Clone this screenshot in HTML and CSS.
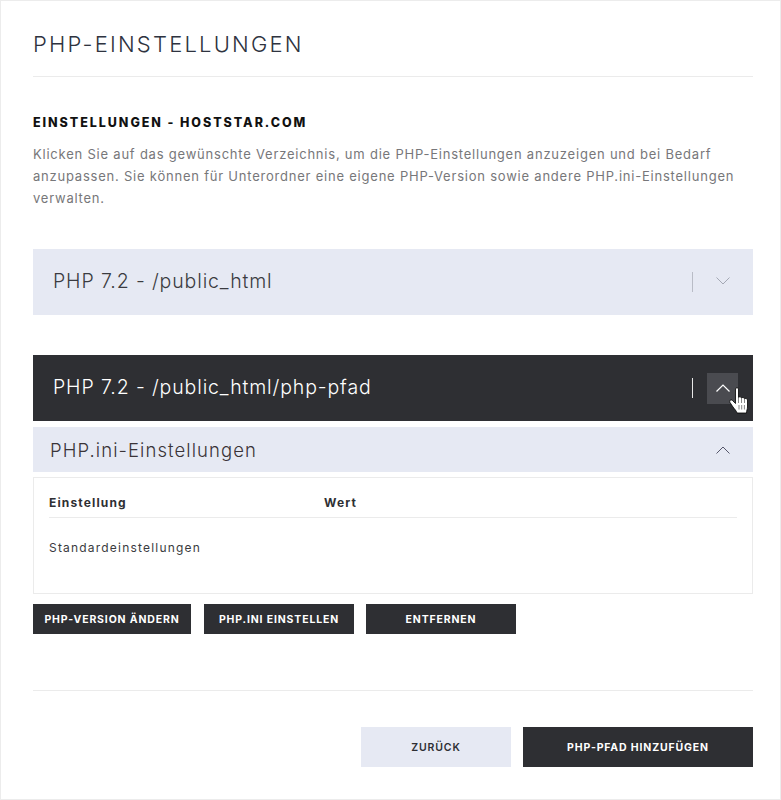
FILE: index.html
```html
<!DOCTYPE html>
<html lang="de">
<head>
<meta charset="utf-8">
<title>PHP-Einstellungen</title>
<link rel="stylesheet" href="styles.css">
</head>
<body>
<main class="page">
  <h1 class="title">PHP-EINSTELLUNGEN</h1>
  <section class="intro">
    <h2 class="heading">EINSTELLUNGEN - HOSTSTAR.COM</h2>
    <p class="lead">Klicken Sie auf das gewünschte Verzeichnis, um die PHP-Einstellungen anzuzeigen und bei Bedarf anzupassen. Sie können für Unterordner eine eigene PHP-Version sowie andere PHP.ini-Einstellungen verwalten.</p>
  </section>

  <div class="panel panel-light">
    <span class="panel-name">PHP 7.2 - /public_html</span>
    <span class="sep"></span>
    <span class="toggle">
      <svg class="chev chev-down" width="14" height="8" viewBox="0 0 14 8"><path d="M0.5 0.5 L7 7 L13.5 0.5" fill="none" stroke="#a4a8b4" stroke-width="1"/></svg>
    </span>
  </div>

  <div class="panel panel-dark">
    <span class="panel-name">PHP 7.2 - /public_html/php-pfad</span>
    <span class="sep"></span>
    <span class="toggle toggle-hover">
      <svg class="chev" width="14" height="8" viewBox="0 0 14 8"><path d="M0.5 7.5 L7 1 L13.5 7.5" fill="none" stroke="#ffffff" stroke-width="1.2"/></svg>
      <svg class="cursor" width="20" height="27" viewBox="0 0 20 27"><path d="M6.5 2 C6.5 0.2 9.5 0.2 9.5 2 L9.5 10.5 C10 9.5 12.5 9.5 12.5 11 C13 10.2 15.5 10.2 15.5 11.8 C16 11.2 18.5 11.3 18.5 13 L18.5 20 C18.5 22 17.5 23.5 17.5 26 L8 26 C7.5 24 5.5 22 4 20 L1 15.5 C0 13.5 2 12 3.5 13.5 L6.5 16.5 Z" fill="#ffffff" stroke="#000000" stroke-width="0.8"/><path d="M9.5 10.5 V16 M12.5 11 V16 M15.5 11.8 V16 M10 18 V22.5 M12.7 18 V22.5 M15.4 18 V22.5" stroke="#555555" stroke-width="0.7" fill="none"/></svg>
    </span>
  </div>

  <div class="subbar">
    <span class="subbar-name">PHP.ini-Einstellungen</span>
    <svg class="chev" width="14" height="8" viewBox="0 0 14 8"><path d="M0.5 7.5 L7 1 L13.5 7.5" fill="none" stroke="#55566a" stroke-width="1"/></svg>
  </div>

  <div class="settings">
    <div class="settings-head">
      <span class="col-key">Einstellung</span>
      <span>Wert</span>
    </div>
    <div class="settings-row">Standardeinstellungen</div>
  </div>

  <div class="actions">
    <button class="btn btn-small btn-w158">PHP-VERSION ÄNDERN</button>
    <button class="btn btn-small btn-w150">PHP.INI EINSTELLEN</button>
    <button class="btn btn-small btn-w150 btn-last">ENTFERNEN</button>
  </div>

  <footer class="footer">
    <button class="btn btn-large btn-light">ZURÜCK</button>
    <button class="btn btn-large btn-primary">PHP-PFAD HINZUFÜGEN</button>
  </footer>
</main>
</body>
</html>
```

FILE: styles.css
```css
* { box-sizing: border-box; }
html, body { margin: 0; padding: 0; background: #fff; }
body { font-family: "Inter", "Liberation Sans", sans-serif; color: #2e2f33; }

.page {
  width: 781px;
  height: 800px;
  border: 1px solid #ececec;
  padding: 0 27px 0 32px;
  overflow: hidden;
}

.title {
  margin: 0;
  height: 76px;
  padding-top: 31px;
  border-bottom: 1px solid #ebebeb;
  font-size: 22px;
  line-height: 25px;
  font-weight: 300;
  letter-spacing: 2.2px;
  color: #2e3340;
}

.intro { padding-top: 38px; }
.heading {
  margin: 0;
  font-size: 12.5px;
  line-height: 16px;
  font-weight: 800;
  letter-spacing: 1.95px;
  color: #111;
}
.lead {
  margin: 12px 0 0;
  font-size: 13px;
  line-height: 22px;
  font-weight: 400;
  letter-spacing: 0.78px;
  color: #77777a;
}

.panel {
  display: flex;
  align-items: center;
  height: 66px;
  padding: 0 15px 0 20px;
}
.panel-name {
  flex: 1;
  font-size: 19.5px;
  line-height: 24px;
  margin-top: -2px;
  font-weight: 300;
  letter-spacing: 0.88px;
}
.panel-light { margin-top: 40px; background: #e6e9f3; color: #3a3b40; }
.panel-dark { margin-top: 40px; background: #2e2f33; color: #fff; }

.sep { width: 1px; height: 20px; background: #b9bcc6; margin-right: 14px; }
.panel-dark .sep { background: #e8e8e8; }

.toggle {
  position: relative;
  width: 31px;
  height: 31px;
  display: flex;
  align-items: center;
  justify-content: center;
}
.toggle-hover { background: #4a4b50; }
.chev { display: block; }
.chev-down { margin-bottom: 2px; }
.cursor { position: absolute; left: 22px; top: 14px; }

.subbar {
  display: flex;
  align-items: center;
  justify-content: space-between;
  height: 45px;
  margin-top: 6px;
  padding: 0 23px 0 17px;
  background: #e6e9f3;
}
.subbar-name {
  font-size: 18.5px;
  font-weight: 300;
  letter-spacing: 1.07px;
  color: #3a3438;
}

.settings {
  height: 117px;
  margin-top: 5px;
  padding: 0 15px;
  border: 1px solid #ebebeb;
}
.settings-head {
  display: flex;
  align-items: center;
  height: 40px;
  padding-top: 9px;
  border-bottom: 1px solid #ebebeb;
  font-size: 12px;
  font-weight: 700;
  letter-spacing: 1.15px;
  color: #2e2f33;
}
.col-key { width: 275px; }
.settings-row {
  padding-top: 22px;
  font-size: 12px;
  line-height: 16px;
  font-weight: 400;
  letter-spacing: 1.2px;
  color: #3a3b40;
}

.actions {
  display: flex;
  gap: 13px;
  margin-top: 10px;
  padding-bottom: 56px;
  border-bottom: 1px solid #ebebeb;
}
.btn {
  border: 0;
  padding: 0;
  font-family: inherit;
  font-weight: 700;
  text-align: center;
}
.btn-small {
  height: 30px;
  background: #2e2f33;
  color: #fff;
  font-size: 10.5px;
  letter-spacing: 0.85px;
}
.btn-w158 { width: 158px; }
.btn-w150 { width: 150px; }
.btn-last { margin-left: -1px; }

.footer {
  display: flex;
  justify-content: flex-end;
  gap: 12px;
  margin-top: 36px;
}
.btn-large { height: 40px; font-size: 10.5px; letter-spacing: 0.85px; }
.btn-light { width: 150px; background: #e6e9f3; color: #2e2f33; font-weight: 600; }
.btn-primary { width: 230px; background: #2e2f33; color: #fff; }
```
